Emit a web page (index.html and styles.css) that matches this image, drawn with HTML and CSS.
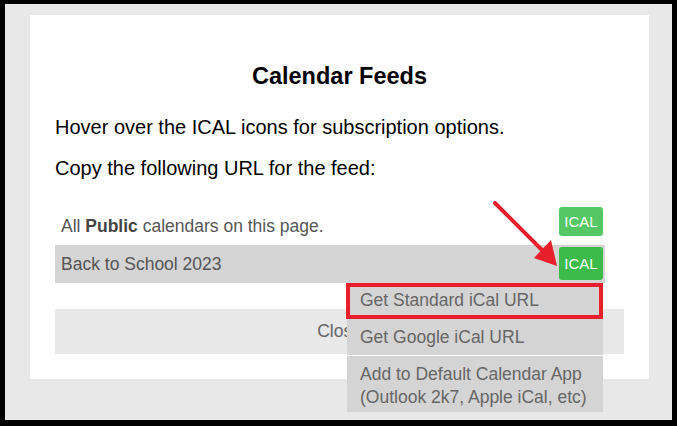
FILE: index.html
```html
<!DOCTYPE html>
<html>
<head>
<meta charset="utf-8">
<link rel="stylesheet" href="styles.css">
</head>
<body>
<div class="frame">
  <div class="modal">
    <h2 class="title">Calendar Feeds</h2>
    <p class="lead">Hover over the ICAL icons for subscription options.</p>
    <p class="lead">Copy the following URL for the feed:</p>
    <div class="rows">
      <div class="row">
        <span>All <b>Public</b> calendars on this page.</span>
        <span class="ical ical-first">ICAL</span>
      </div>
      <div class="row row-active">
        <span>Back to School 2023</span>
        <span class="ical ical-hover">ICAL</span>
      </div>
    </div>
    <div class="close">Close</div>
  </div>
  <ul class="menu">
    <li class="menu-item item-std">Get Standard iCal URL</li>
    <li class="menu-item item-google">Get Google iCal URL</li>
    <li class="menu-item item-app">Add to Default Calendar App<br>(Outlook 2k7, Apple iCal, etc)</li>
  </ul>
  <div class="highlight"></div>
  <svg class="arrow" width="70" height="70" viewBox="0 0 70 70">
    <line x1="2" y1="2" x2="50" y2="50" stroke="#e8202c" stroke-width="4" stroke-linecap="round"/>
    <polygon points="64,65 41,57 58,39" fill="#e8202c"/>
  </svg>
</div>
</body>
</html>
```

FILE: styles.css
```css
* { box-sizing: border-box; }
html, body { margin: 0; padding: 0; }
body {
  background: #000;
  width: 677px;
  height: 426px;
  padding: 4px 5px 6px 5px;
  font-family: "Liberation Sans", Arial, sans-serif;
}
.frame {
  position: relative;
  background: #e8e8e8;
  height: 416px;
  padding: 11px 0 0 25px;
}
.modal {
  background: #fff;
  width: 619px;
  height: 364px;
  padding: 47px 25px 0 25px;
}
.title {
  margin: 0 0 25px 0;
  text-align: center;
  font-size: 23.5px;
  font-weight: bold;
  color: #000;
  line-height: 28px;
}
.lead {
  margin: 0 0 17px 0;
  font-size: 20px;
  line-height: 24px;
  color: #000;
}
.rows {
  width: 550px;
  margin-top: 27px;
}
.row {
  display: flex;
  justify-content: space-between;
  align-items: flex-start;
  height: 38px;
  padding: 0 2px 0 6px;
  font-size: 17.5px;
  color: #555;
}
.row > span:first-child { line-height: 38px; }
.row b { color: #444; }
.row-active { background: #d4d4d4; }
.ical {
  display: inline-flex;
  align-items: center;
  justify-content: center;
  width: 44px;
  border-radius: 3px;
  background: #55c865;
  color: #fff;
  font-size: 15px;
}
.ical-first { height: 29px; margin-top: 0; }
.ical-hover { background: #3cbb4b; height: 33px; margin-top: 2px; }
.close {
  margin-top: 26px;
  height: 45px;
  background: #e8e8e8;
  display: flex;
  align-items: center;
  justify-content: center;
  font-size: 17.5px;
  color: #666;
}
.menu {
  position: absolute;
  left: 342px;
  top: 279px;
  width: 256px;
  margin: 0;
  padding: 0;
  list-style: none;
}
.menu-item {
  background: #d4d4d4;
  color: #666;
  font-size: 17.5px;
  line-height: 23px;
  padding: 0 13px;
}
.item-std { height: 36px; padding-top: 6px; }
.item-google { height: 37px; padding-top: 7px; border-bottom: 1px solid #fff; }
.item-app { height: 56px; padding-top: 7px; line-height: 22.5px; }
.highlight {
  position: absolute;
  left: 341px;
  top: 279px;
  width: 257px;
  height: 36px;
  border: 4px solid #e8202c;
}
.arrow {
  position: absolute;
  left: 488px;
  top: 197px;
}
```
